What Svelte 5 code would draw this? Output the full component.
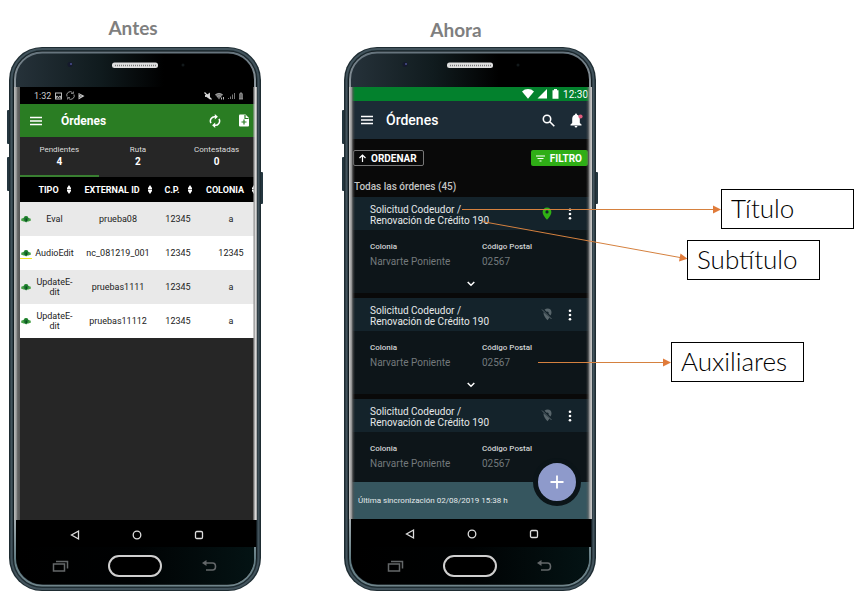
<script>
  const tabs = [
    { name: 'Pendientes', count: 4 },
    { name: 'Ruta', count: 2 },
    { name: 'Contestadas', count: 0 }
  ];
  const columns = ['TIPO', 'EXTERNAL ID', 'C.P.', 'COLONIA'];
  const rows = [
    { type: ['Eval'], id: 'prueba08', cp: '12345', colonia: 'a' },
    { type: ['AudioEdit'], id: 'nc_081219_001', cp: '12345', colonia: '12345', marked: true },
    { type: ['UpdateE-', 'dit'], id: 'pruebas1111', cp: '12345', colonia: 'a' },
    { type: ['UpdateE-', 'dit'], id: 'pruebas11112', cp: '12345', colonia: 'a' }
  ];
  const orders = [{ located: true }, { located: false }, { located: false }];
  let activeTab = $state(0);
</script>

{#snippet frame(id)}
  <svg class="frame" viewBox="0 0 252 544" preserveAspectRatio="none" aria-hidden="true">
    <defs>
      <linearGradient id="{id}-rim" x1="0" x2="0" y1="0" y2="1">
        <stop offset="0" stop-color="#66747d" />
        <stop offset=".1" stop-color="#a4abb0" />
        <stop offset=".88" stop-color="#a0aaae" />
        <stop offset=".95" stop-color="#617b82" />
        <stop offset="1" stop-color="#70858b" />
      </linearGradient>
      <linearGradient id="{id}-glass" x1="0" x2="1" y1="0" y2="0">
        <stop offset="0" stop-color="#26323a" />
        <stop offset=".35" stop-color="#101b1e" />
        <stop offset=".62" stop-color="#000" />
        <stop offset="1" stop-color="#000" />
      </linearGradient>
      <linearGradient id="{id}-chin" x1="0" x2="1" y1="0" y2="0">
        <stop offset="0" stop-color="#000" />
        <stop offset=".5" stop-color="#000203" />
        <stop offset="1" stop-color="#041314" />
      </linearGradient>
    </defs>
    <rect x="-2" y="63" width="4" height="34" rx="1" fill="#24363f" />
    <rect x="-2" y="110" width="4" height="34" rx="1" fill="#24363f" />
    <rect x="250" y="125" width="4" height="32" rx="1" fill="#24363f" />
    <rect width="252" height="544" rx="33" fill="#1e2c32" />
    <rect x="2.5" y="2" width="247" height="540" rx="31" fill="none" stroke="#42535c" stroke-width="2" />
    <rect x="4.5" y="4" width="243" height="535" rx="29" fill="#080f12" />
    <rect x="6" y="5.500" width="240" height="533" rx="27" fill="url(#{id}-glass)" stroke="url(#{id}-rim)" stroke-width="2" />
    <path d="M7 473h238v38a27 27 0 0 1-27 26.500H34a27 27 0 0 1-27-26.500Z" fill="url(#{id}-chin)" />
    <rect x="103" y="15.500" width="46" height="5.500" rx="2.500" fill="#dedede" />
    <path d="M106 18.500h41" stroke="#777" stroke-width="1.500" stroke-dasharray="1 1" />
    <circle cx="61" cy="17.500" r="2.500" fill="#15192c" />
    <circle cx="62" cy="17" r="1" fill="#4a4f8e" />
    <circle cx="174" cy="18" r="1.500" fill="#12191b" />
  </svg>
{/snippet}

{#snippet edges()}
  <span class="edge left" aria-hidden="true"></span>
  <span class="edge right" aria-hidden="true"></span>
{/snippet}

{#snippet menuIcon()}
  <svg width="13" height="10" viewBox="0 0 13 10" stroke="#fff" stroke-width="1.500"><path d="M0 1.500h12M0 5h12M0 8.500h12" /></svg>
{/snippet}

{#snippet navigation()}
  <nav class="softkeys">
    <button aria-label="Atrás"><svg viewBox="0 0 12 12"><path d="M9.500 2v8L2.500 6Z" /></svg></button>
    <button aria-label="Inicio"><svg viewBox="0 0 12 12"><circle cx="6" cy="6" r="3.800" /></svg></button>
    <button aria-label="Recientes"><svg viewBox="0 0 12 12"><rect x="2.500" y="2.500" width="7" height="7" rx="1.300" /></svg></button>
  </nav>
{/snippet}

{#snippet hardware()}
  <div class="hardkeys">
    <svg width="18" height="14" viewBox="0 0 18 14" fill="none" stroke="#64686a" stroke-width="1.500"><path d="M1.500 5h11v7h-11ZM4 2.500h11.500v7" /></svg>
    <span class="home"></span>
    <svg width="18" height="14" viewBox="0 0 18 14" fill="none" stroke="#64686a" stroke-width="1.600"><path d="M4 4h8.500q3 0 3 3.500t-3 3.500H6" /><path d="m6.500 1-4.500 3 4.500 3Z" fill="#64686a" stroke="none" /></svg>
  </div>
{/snippet}

<main>
  <section class="device">
    <h2>Antes</h2>
    <div class="phone before">
      {@render frame('before')}
      <div class="screen">
        <div class="status">
          <span>1:32</span>
          <svg width="9" height="8" viewBox="0 0 9 8"><path fill="#bbb" fill-rule="evenodd" d="M1 .500h7v7H1ZM2 1.500v3l1-1 1.500 1.500L6 3.500l1 1v-3ZM2 6.500h5L5.800 5 4.500 6.200 3.300 5Z" /></svg>
          <svg width="9" height="9" viewBox="0 0 9 9" fill="none" stroke="#999"><path d="M1 5.500a3.500 3.500 0 0 1 5.500-4M8 3.500a3.500 3.500 0 0 1-5.500 4" /><path d="M5 2.500h2.500V.500M4 6.500H1.500v2" stroke-width=".8" /></svg>
          <svg width="7" height="8" viewBox="0 0 7 8"><path fill="#ccc" d="M.500 1 6.500 4 .500 7.500Z" /><path d="m.500 2 3 2-3 2" stroke="#444" fill="none" stroke-width=".6" /></svg>
          <span class="push"></span>
          <svg width="8" height="8" viewBox="0 0 8 8"><path d="M1 3h1.500L6 .500v7L2.500 5H1Z" fill="#ccc" /><path d="m.500.500 7 7" stroke="#ddd" stroke-width="1.200" /></svg>
          <svg width="10" height="8" viewBox="0 0 10 8"><path d="M0 2.500a6 6 0 0 1 8 0L4 7.500Z" fill="#777" /><path d="M.500 2.700a5.500 5.500 0 0 1 7 0M2 4.500a3 3 0 0 1 4 0" fill="none" stroke="#aaa" stroke-width=".8" /><path d="M6.500 5.500v2M8.500 5v2.500" stroke="#bbb" /></svg>
          <svg width="7" height="8" viewBox="0 0 7 8" fill="#777"><path d="M0 6h1v1H0ZM2 4.500h1V7H2ZM4 2.500h1V7H4ZM6 1h1v6H6Z" /></svg>
          <svg width="6" height="8" viewBox="0 0 6 8"><path d="M2 .500h2v1h1v6H1v-6h1Z" fill="#888" /><path d="M1 3h4M1 5h4" stroke="#444" stroke-width=".6" /></svg>
        </div>
        <header class="appbar">
          <button aria-label="Menú">{@render menuIcon()}</button>
          <h1>Órdenes</h1>
          <button class="push" aria-label="Sincronizar">
            <svg width="12" height="14" viewBox="0 0 12 14"><path d="M6.500 2.800A4.300 4.300 0 0 0 2 9.200M5.500 11.200A4.300 4.300 0 0 0 10 4.800" fill="none" stroke="#fff" stroke-width="1.500" /><path d="M5.800 0v5.600L8.900 2.800ZM6.200 14V8.400L3.100 11.200Z" fill="#fff" /></svg>
          </button>
          <button aria-label="Nueva orden">
            <svg width="10" height="13" viewBox="0 0 10 13"><path d="M1 .500h5.500L10 4v7.500q0 1-1 1H1q-1 0-1-1v-10Q0 .500 1 .500Z" fill="#fff" /><path d="M6 1v3.500h3.500M5 5.500v5M2.500 8h5" stroke="#2a7d23" stroke-width="1.200" fill="none" /></svg>
          </button>
        </header>
        <div class="tabs">
          {#each tabs as tab, i}
            <button class:active={activeTab === i} onclick={() => (activeTab = i)}>
              <span>{tab.name}</span><strong>{tab.count}</strong>
            </button>
          {/each}
        </div>
        <div class="table-view">
          <table>
            <colgroup><col class="c0" /><col class="c1" /><col class="c2" /><col class="c3" /><col class="c4" /></colgroup>
            <thead>
              <tr>
                <th></th>
                {#each columns as column}
                  <th><button>{column}<svg width="4" height="9" viewBox="0 0 4 9" fill="#fff"><path d="M2 0 4 3V4.200H0V3ZM0 4.800h4V6L2 9 0 6Z" /></svg></button></th>
                {/each}
              </tr>
            </thead>
            <tbody>
              {#each rows as row}
                <tr>
                  <td>
                    <span class="cloud" class:marked={row.marked}>
                      <svg width="10" height="8" viewBox="0 0 10 8"><path d="M2.500 6.500 0 5.500.500 3.500l2-.5L3.800 1h2.400l1.300 2 2 .5.500 2-2.500 1Z" fill="#46a046" /><path d="m2.500 3.500 1.800-2h1.900l1.500 2-.9 2.300L5.200 7.500 3.300 6Z" fill="#1d7a30" /><path d="M5.200 3.500v2.500" stroke="#06351a" /></svg>
                    </span>
                  </td>
                  <td>{#each row.type as line}<div>{line}</div>{/each}</td>
                  <td>{row.id}</td>
                  <td>{row.cp}</td>
                  <td>{row.colonia}</td>
                </tr>
              {/each}
            </tbody>
          </table>
        </div>
        {@render edges()}
      </div>
      {@render navigation()}
      {@render hardware()}
    </div>
  </section>

  <section class="device now">
    <h2>Ahora</h2>
    <div class="phone after">
      {@render frame('after')}
      <div class="screen">
        <div class="status">
          <svg width="12" height="10" viewBox="0 0 12 10"><path d="M0 2.500a8.500 8.500 0 0 1 12 0L6 9.700Z" fill="#fff" /></svg>
          <svg width="10" height="10" viewBox="0 0 10 10"><path d="M10 0v9.500H.500Z" fill="#fff" /></svg>
          <svg class="battery" width="7" height="10" viewBox="0 0 7 10"><path d="M2 0h3v1.200h1.500v8.500h-6V1.200H2Z" fill="#fff" /></svg>
          <span>12:30</span>
        </div>
        <header class="appbar">
          <button aria-label="Menú">{@render menuIcon()}</button>
          <h1>Órdenes</h1>
          <button class="push" aria-label="Buscar">
            <svg width="13" height="13" viewBox="0 0 13 13" fill="none" stroke="#fff" stroke-width="1.600"><circle cx="5" cy="5" r="3.700" /><path d="m7.800 7.800 4.500 4.500" /></svg>
          </button>
          <button aria-label="Notificaciones">
            <svg width="13" height="15" viewBox="0 0 13 15"><path d="M6 .500q1 0 1 1.200Q9.800 2.500 9.800 6v4l1.700 1.500v1H.500v-1L2.200 10V6Q2.200 2.500 5 1.700 5 .500 6 .500ZM4.600 13h2.800Q7.300 14.500 6 14.500T4.600 13Z" fill="#fff" /><circle cx="10.500" cy="3.500" r="2.100" fill="#e35d7e" /></svg>
          </button>
        </header>
        <div class="tools">
          <button class="sort"><svg width="7" height="8" viewBox="0 0 7 8" fill="none" stroke="#fff" stroke-width="1.200"><path d="M3.500 8V1M.500 4l3-3 3 3" /></svg>ORDENAR</button>
          <button class="filter"><svg width="9" height="7" viewBox="0 0 9 7" stroke="#fff" stroke-width="1.200"><path d="M0 1h9M1.500 3.500h6M3.500 6h2" /></svg>FILTRO</button>
        </div>
        <h3>Todas las órdenes (45)</h3>
        <div class="orders">
          {#each orders as order}
            <article>
              <header>
                <h4>Solicitud Codeudor /<br />Renovación de Crédito 190</h4>
                {#if order.located}
                  <svg width="12" height="13" viewBox="-1 0 12 13"><path fill="#2fb214" fill-rule="evenodd" d="M5 .500a4.400 4.400 0 0 1 4.400 4.400Q9.400 8 5 12.700.600 8 .600 4.900A4.400 4.400 0 0 1 5 .500ZM5 3.300a1.600 1.600 0 1 0 0 3.200 1.600 1.600 0 0 0 0-3.200Z" /></svg>
                {:else}
                  <svg width="12" height="13" viewBox="0 0 12 13"><path fill="#59666c" d="M3.500 1.800Q5 .600 6.500.600A4 4 0 0 1 10.500 4.600q0 1.300-1 3L7.600 5.700a1.500 1.500 0 0 0-2-2ZM2.500 4.200 8.600 9.600 6.500 12.300Q2.500 8 2.500 5Z" /><path d="m1 1.500 9.500 9.500" stroke="#59666c" /></svg>
                {/if}
                <button aria-label="Más opciones"><svg width="4" height="12" viewBox="0 0 4 12" fill="#fff"><circle cx="2" cy="1.700" r="1.300" /><circle cx="2" cy="6" r="1.300" /><circle cx="2" cy="10.300" r="1.300" /></svg></button>
              </header>
              <dl>
                <div><dt>Colonia</dt><dd>Narvarte Poniente</dd></div>
                <div><dt>Código Postal</dt><dd>02567</dd></div>
              </dl>
              <button class="expand" aria-label="Mostrar más"><svg width="8" height="6" viewBox="0 0 8 6" fill="none" stroke="#fff" stroke-width="1.500"><path d="m.700 1 3.300 3.300L7.300 1" /></svg></button>
            </article>
          {/each}
        </div>
        <footer>
          Última sincronización 02/08/2019 15:38 h
          <button class="fab" aria-label="Agregar"><svg width="14" height="14" viewBox="0 0 14 14" stroke="#fff" stroke-width="1.800"><path d="M7 .500v13M.500 7h13" /></svg></button>
        </footer>
        {@render edges()}
      </div>
      {@render navigation()}
      {@render hardware()}
    </div>
  </section>

  <svg class="arrows" width="860" height="602" viewBox="0 0 860 602" aria-hidden="true">
    <g stroke="#d5813f" fill="none"><path d="M462 209.500h253M482 221.500l198 36M538 362.500h126" /></g>
    <path fill="#e07b3a" d="m713 205.500 8 4-8 4ZM680.500 253.500l7 5.300-8.500 2.600ZM663 358.500l8 4-8 4Z" />
  </svg>
  <p class="note title">Título</p>
  <p class="note subtitle">Subtítulo</p>
  <p class="note extra">Auxiliares</p>
</main>

<style>
  :global(body) { margin: 0; background: #fff; }
  main { position: relative; display: flex; gap: 83px; padding: 0 9px 10px; font-family: Roboto, sans-serif; color: #fff; }
  h1, h2, h3, h4, p, dl, dd { margin: 0; }
  button { margin: 0; padding: 0; border: 0; background: none; color: inherit; font: inherit; cursor: pointer; }
  svg { display: block; flex: none; }
  .push { margin-left: auto; }

  .device { flex: none; width: 252px; }
  h2 { box-sizing: border-box; height: 47px; padding: 16px 4px 0 0; color: #7f7f7f; font: 700 19px/24px "Century Gothic", Lato, sans-serif; text-align: center; }
  .now h2 { padding: 18px 28px 0 0; }

  .phone { position: relative; display: flex; flex-direction: column; box-sizing: border-box; min-height: 544px; padding-top: 40px; }
  .frame { position: absolute; inset: 0; width: 100%; height: 100%; overflow: visible; }
  .screen { position: relative; display: flex; flex-direction: column; }
  .before .screen { margin: 0 5px 0 11px; height: 433px; background: #262626; }
  .after .screen { margin: 0 6px 0 8px; height: 432px; background: #090909; }
  .edge { position: absolute; top: 0; bottom: 0; pointer-events: none; }
  .before .edge.left { left: -6px; width: 6px; background: linear-gradient(90deg, #bbb, #a0a0a0 35%, #666 60%, #555); }
  .before .edge.right { right: -1px; width: 4px; background: linear-gradient(90deg, #7777, #ddd 60%, #999); }
  .after .edge.left { left: -3px; width: 6px; background: linear-gradient(90deg, #ccc, #999 40%, #555a 65%, #0000); }
  .after .edge.right { right: -2px; width: 6px; background: linear-gradient(90deg, #0000, #6668 35%, #aaa 65%, #ccc); }

  .before .status { display: flex; align-items: center; gap: 3px; height: 17px; padding: 0 12px 0 14px; background: #000; color: #ccc; font-size: 9px; }
  .appbar { display: flex; align-items: center; }
  .before .appbar { height: 33px; gap: 18px; padding: 0 7px 0 10px; background: #2a7d23; }
  .before h1 { font-size: 12px; line-height: 16px; font-weight: 700; }
  .tabs { display: grid; grid-template-columns: repeat(3, 1fr); height: 40px; }
  .tabs button { box-sizing: border-box; border-bottom: 2px solid transparent; font-size: 8px; line-height: 12px; color: #ddd; }
  .tabs button.active { border-color: #397f31; }
  .tabs span, .tabs strong { display: block; }
  .tabs strong { color: #fff; font-size: 10px; }
  .table-view { overflow: hidden; margin-right: 2px; background: #000; }
  table { width: 245px; table-layout: fixed; border-collapse: collapse; color: #222; font-size: 9px; line-height: 10px; text-align: center; }
  .c0 { width: 12px; }
  .c1 { width: 45px; }
  .c2 { width: 82px; }
  .c3 { width: 38px; }
  .c4 { width: 68px; }
  th, td { padding: 0; white-space: nowrap; }
  th { height: 25px; background: #000; color: #fff; }
  th button { display: flex; align-items: center; justify-content: center; gap: 8px; width: 100%; font-weight: 700; }
  td { height: 34px; background: #fff; }
  tbody tr:nth-child(odd) td { background: #e9e9e9; }
  .cloud { display: block; padding: 0 1px; }
  .cloud.marked { padding: 2px 1px 1px; border-bottom: 1px solid #f2e422; }

  .after .status { display: flex; align-items: center; justify-content: flex-end; gap: 3px; height: 14px; padding-right: 2px; background: #03812d; font-size: 10px; }
  .battery { margin: 0 1px 0 2px; }
  .after .appbar { height: 38px; gap: 12px; padding: 0 7px 0 9px; background: #1c2b36; }
  .after .appbar .push { margin-right: 3px; }
  .after h1 { font-size: 14px; line-height: 18px; font-weight: 500; }
  .tools { display: flex; justify-content: space-between; padding: 11px 2px 0 1px; }
  .tools button { display: flex; align-items: center; gap: 5px; box-sizing: border-box; height: 16px; padding: 0 6px 0 5px; border-radius: 2px; font-size: 10px; font-weight: 700; }
  .sort { border: 1px solid #777; }
  .filter { background: #2fae16; }
  h3 { padding: 14px 2px 3px; color: #c4c4c4; font-size: 10px; line-height: 14px; font-weight: 500; }
  .orders { flex: 1; display: flex; flex-direction: column; gap: 5px; overflow: hidden; }
  article { flex: none; background: #0d1519; }
  article header { display: flex; align-items: center; gap: 15px; height: 33px; padding: 0 18px; background: #14232b; }
  h4 { flex: 1; padding-top: 2px; font-size: 10px; line-height: 11px; font-weight: 400; color: #e6e9ea; }
  dl { display: flex; padding: 10px 18px 0; }
  dl div { width: 112px; flex: none; }
  dt { color: #d0d3d4; font-size: 8px; line-height: 14px; font-weight: 500; }
  dd { color: #73797c; font-size: 10px; line-height: 16px; white-space: nowrap; }
  .expand { display: flex; align-items: center; justify-content: center; box-sizing: border-box; width: 100%; height: 23px; padding-top: 4px; }
  footer { position: relative; display: flex; align-items: center; height: 37px; padding-left: 6px; background: #36565f; color: #e4eaeb; font-size: 8px; }
  .fab { position: absolute; top: -24px; right: 9px; display: grid; place-items: center; width: 48px; height: 48px; border: 5px solid #0b1418; border-radius: 50%; background: #8e9acb; }

  .softkeys { position: relative; display: flex; justify-content: center; align-items: center; gap: 50px; margin: 0 5px 0 7px; height: 27px; padding: 2px 0 0 2px; box-sizing: border-box; background: #000; }
  .after .softkeys { height: 28px; }
  .softkeys svg { width: 12px; height: 12px; fill: none; stroke: #ddd; stroke-width: 1.3; }
  .hardkeys { position: relative; display: flex; justify-content: center; align-items: center; gap: 38px; height: 38px; }
  .home { box-sizing: border-box; width: 54px; height: 22px; border: 2px solid #cfcfcf; border-radius: 11px; background: #000; }

  .arrows { position: absolute; top: 0; left: 0; pointer-events: none; }
  .note { position: absolute; box-sizing: border-box; width: 133px; height: 40px; padding-left: 9px; border: 1px solid #000; background: #fff; color: #000; font: 300 26px/36px "Century Gothic", Lato, sans-serif; }
  .title { left: 721px; top: 189px; }
  .subtitle { left: 687px; top: 240px; }
  .extra { left: 671px; top: 342px; }
</style>
